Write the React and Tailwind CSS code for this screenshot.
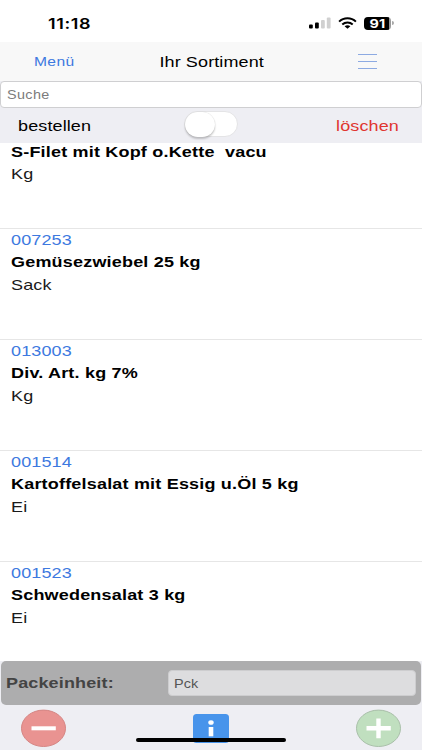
import { useState } from 'react';
import clsx from 'clsx';

const articles = [
  { name: 'S-Filet mit Kopf o.Kette  vacu', unit: 'Kg' },
  { nr: '007253', name: 'Gemüsezwiebel 25 kg', unit: 'Sack' },
  { nr: '013003', name: 'Div. Art. kg 7%', unit: 'Kg' },
  { nr: '001514', name: 'Kartoffelsalat mit Essig u.Öl 5 kg', unit: 'Ei' },
  { nr: '001523', name: 'Schwedensalat 3 kg', unit: 'Ei' },
];

// Wide text: the whole UI is stretched horizontally
function Wide({ className, children }) {
  return (
    <span className={clsx('inline-block whitespace-pre scale-x-[1.2]', className)}>{children}</span>
  );
}

function StatusBar() {
  return (
    <div className="h-[42px] shrink-0 bg-white flex items-start justify-between pl-12 pr-[28px]">
      <Wide className="origin-left mt-[13.5px] font-['Inter'] font-semibold text-[15px] leading-5 tracking-[0.5px]">11:18</Wide>
      <div className="flex items-center mt-[15.5px] h-[15px]">
        <svg width="22" height="12" viewBox="0 0 22 12">
          <rect x="0" y="7.6" width="3.8" height="3.9" rx="1" fill="#000" />
          <rect x="6" y="5.5" width="3.8" height="6" rx="1" fill="#000" />
          <rect x="12" y="3" width="3.8" height="8.5" rx="1" fill="#d0d0d0" />
          <rect x="17.8" y="0.6" width="3.8" height="10.9" rx="1" fill="#d0d0d0" />
        </svg>
        <svg className="ml-[7px]" width="19" height="12" viewBox="0 0 19 12" fill="none" stroke="#000" strokeWidth="2">
          <path d="M1.1 4.6 C5.7 0.1 13.3 0.1 17.9 4.6" />
          <path d="M4.3 7.5 C7.2 4.8 11.8 4.8 14.7 7.5" />
          <path d="M6.6 9.2 C8.3 7.8 10.7 7.8 12.4 9.2 L9.5 11.7 Z" fill="#000" stroke="none" />
        </svg>
        <div className="ml-[7px] w-[27px] h-[13px] rounded-[4px] bg-[linear-gradient(to_right,#000_91%,#999_91%)] flex items-center justify-center">
          <Wide className="font-['Inter'] font-bold text-[12px] leading-[13px] text-white pr-px">91</Wide>
        </div>
        <div className="ml-px w-[2px] h-1 rounded-r-full bg-[#a8a8a8]" />
      </div>
    </div>
  );
}

function Header() {
  return (
    <div className="h-[39px] shrink-0 bg-[#f8f8f8] grid grid-cols-3 items-center">
      <Wide className="origin-left justify-self-start ml-[34px] pt-px text-[13px] tracking-[0.3px] text-[#3d79e0]">Menü</Wide>
      <Wide className="justify-self-center pt-px pl-px text-[15px] tracking-[0.1px]">Ihr Sortiment</Wide>
      <button className="justify-self-end mr-[45px] w-[19px] flex flex-col gap-[6px]">
        <span className="h-[1.3px] bg-[#8daae2]" />
        <span className="h-[1.3px] bg-[#8daae2]" />
        <span className="h-[1.3px] bg-[#8daae2]" />
      </button>
    </div>
  );
}

function Toolbar() {
  const [on, setOn] = useState(false);

  return (
    <div className="h-[35px] shrink-0 flex items-center justify-between pl-[17.5px] pr-[23px]">
      <Wide className="origin-left w-[67px] pt-px text-[15px] tracking-[0.1px]">bestellen</Wide>
      <button onClick={() => setOn(o => !o)}
        className={clsx('mb-[3px] ml-[6px] w-[54px] h-[26px] rounded-full border border-[#e4e4e6]', on ? 'bg-green-500' : 'bg-white')}>
        <span className={clsx('block w-[30px] h-[25px] rounded-full bg-white shadow-[0_2px_2px_rgba(0,0,0,0.2),0_0_1px_rgba(0,0,0,0.2)]', on && 'translate-x-[21px]')} />
      </button>
      <Wide className="origin-right w-[67px] text-right pt-px text-[15px] tracking-[0.1px] text-[#e0352f]">löschen</Wide>
    </div>
  );
}

function ArticleRow({ nr, name, unit }) {
  return (
    <div className={clsx('shrink-0 border-b border-[#e6e6e6] pl-[11px] flex flex-col items-start text-[15px] leading-[22.3px]', nr ? 'h-[111px]' : 'h-[88px]')}>
      {nr && <Wide className="origin-left tracking-[0.1px] text-[#3d79e0]">{nr}</Wide>}
      <Wide className="origin-left font-bold tracking-[0.16px]">{name}</Wide>
      <Wide className="origin-left text-[#1a1a1a] tracking-[0.1px]">{unit}</Wide>
    </div>
  );
}

function Footer() {
  return (
    <div className="relative h-[89px] shrink-0">
      <div className="mx-px h-[44px] rounded-[5px] bg-[#adadae] flex items-center pl-[5px] pr-[5px]">
        <Wide className="origin-left pt-px font-bold text-[15px] tracking-[0.12px] text-[#444]">Packeinheit:</Wide>
        <div className="ml-auto w-[248px] h-[26px] rounded-[4px] bg-[#dddddf] border border-[#cdcdcf] flex items-center pl-[5px]">
          <Wide className="origin-left pt-px text-[12px] tracking-[0.1px] text-[#555]">Pck</Wide>
        </div>
      </div>
      <div className="flex justify-between items-start pl-[21px] pr-[21px] pt-1">
        <button>
          <svg width="45" height="38" viewBox="0 0 45 38">
            <ellipse cx="22.5" cy="19.3" rx="22" ry="18.2" fill="#e99391" stroke="#d58583" />
            <rect x="10.5" y="17.3" width="24.3" height="4" fill="#fff" />
          </svg>
        </button>
        <button className="mt-[4.5px]">
          <svg width="36" height="29" viewBox="0 0 36 29">
            <rect width="36" height="29" rx="3.5" fill="#4894eb" />
            <ellipse cx="18" cy="8.5" rx="2.7" ry="2.3" fill="#fff" />
            <rect x="15.7" y="13" width="4.6" height="9.3" fill="#fff" />
          </svg>
        </button>
        <button>
          <svg width="45" height="38" viewBox="0 0 45 38">
            <ellipse cx="22.5" cy="19.3" rx="22" ry="18.2" fill="#c0dfbf" stroke="#a9bfa9" />
            <path d="M10.5 19.3H34.8M22.5 9.5V29.2" stroke="#fff" strokeWidth="4.4" />
          </svg>
        </button>
      </div>
      <div className="absolute left-[136px] bottom-[8px] w-[150px] h-[4px] rounded-full bg-black" />
    </div>
  );
}

export default function App() {
  return (
    <div className="w-[422px] h-[750px] overflow-hidden flex flex-col bg-[#eeeef3] text-black font-['Liberation_Sans',sans-serif]">
      <StatusBar />
      <Header />
      <div className="h-[27px] shrink-0 rounded-[4px] border border-[#cfcfd1] bg-white flex items-center pl-[6px]">
        <Wide className="origin-left pt-px text-[12px] tracking-[0.3px] text-[#7c7c7c]">Suche</Wide>
      </div>
      <Toolbar />
      <div className="flex-1 min-h-0 bg-white overflow-hidden">
        <div className="-mt-[2px] flex flex-col">
          {articles.map(a => <ArticleRow key={a.name} {...a} />)}
        </div>
      </div>
      <Footer />
    </div>
  );
}
